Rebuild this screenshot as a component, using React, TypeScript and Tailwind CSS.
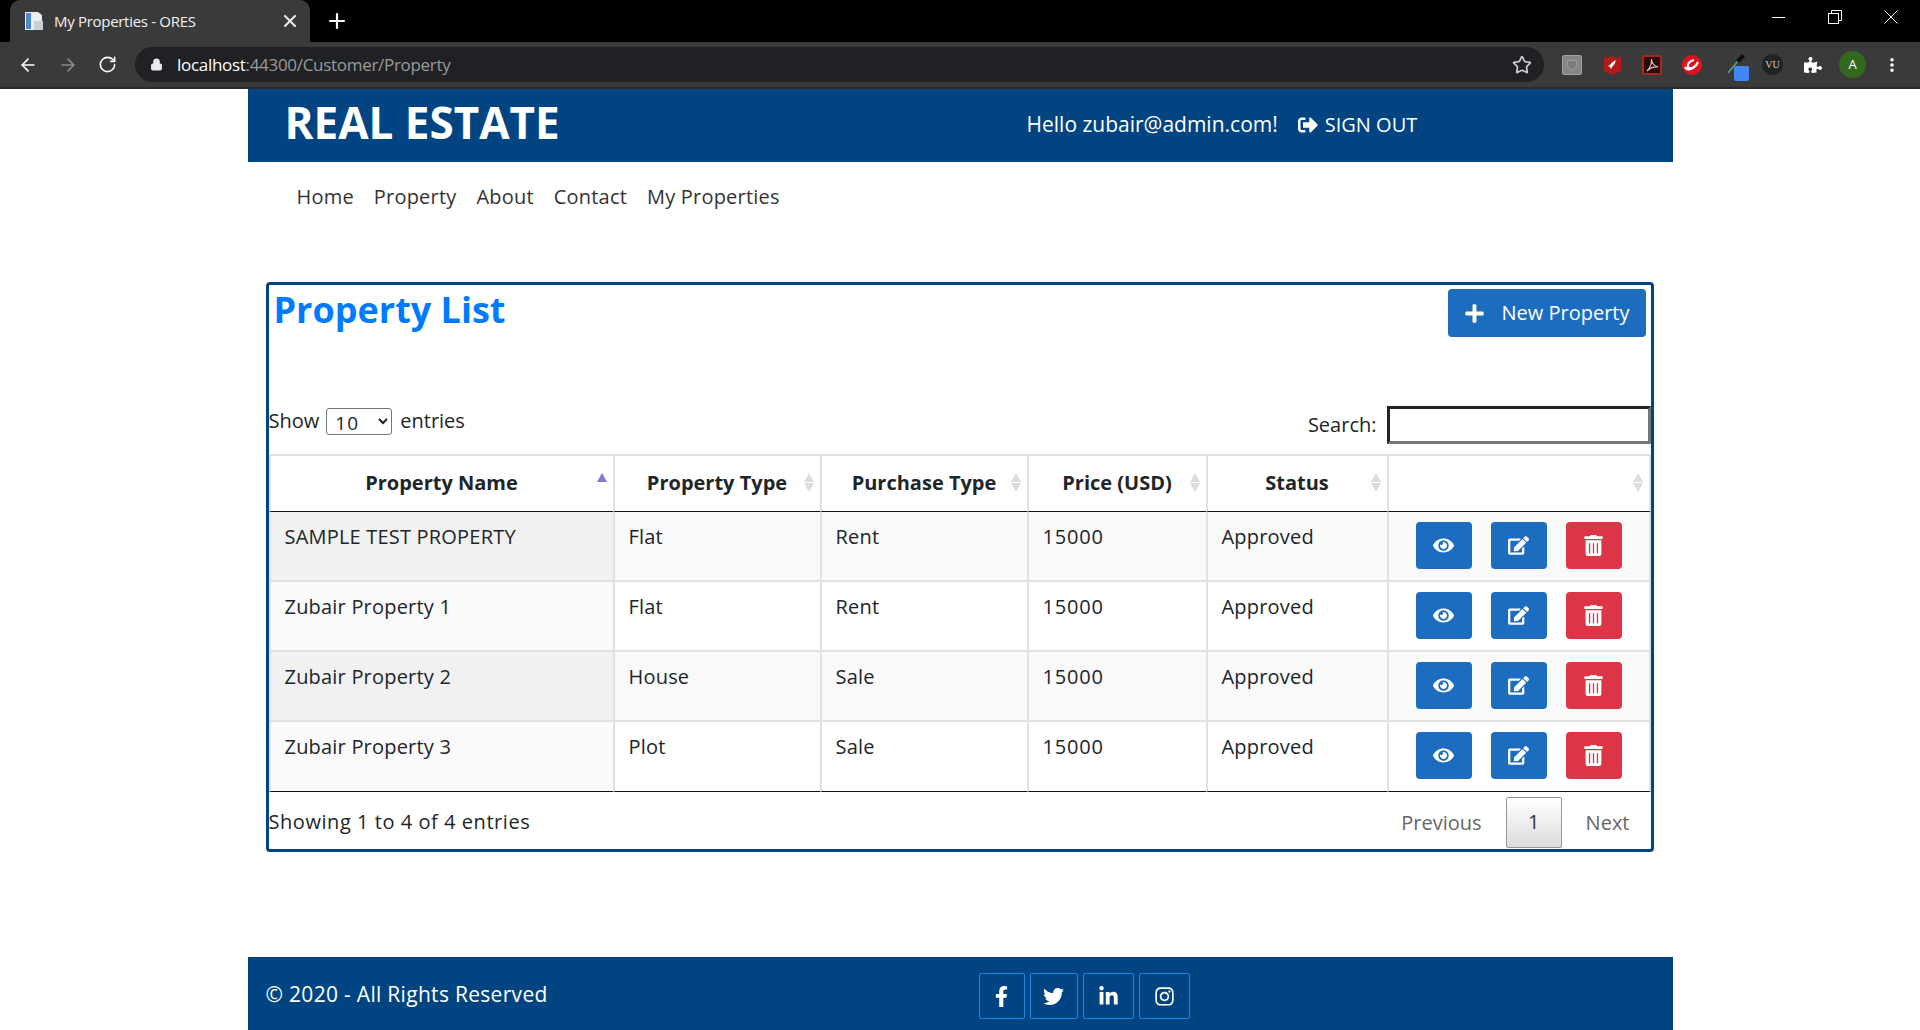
import React from 'react';
import { ArrowLeft, ArrowRight, RotateCw, Lock, Star, X, Plus, MoreVertical } from 'lucide-react';
import { FaEye, FaEdit, FaTrashAlt, FaPlus, FaSignOutAlt, FaFacebookF, FaTwitter, FaLinkedinIn, FaInstagram, FaPuzzlePiece } from 'react-icons/fa';

const rows = [
  { name: 'SAMPLE TEST PROPERTY', type: 'Flat', purchase: 'Rent' },
  { name: 'Zubair Property 1', type: 'Flat', purchase: 'Rent' },
  { name: 'Zubair Property 2', type: 'House', purchase: 'Sale' },
  { name: 'Zubair Property 3', type: 'Plot', purchase: 'Sale' },
];

const headers = [
  { label: 'Property Name', w: 'w-[344px]' },
  { label: 'Property Type', w: 'w-[207px]' },
  { label: 'Purchase Type', w: 'w-[207px]' },
  { label: 'Price (USD)', w: 'w-[179px]' },
  { label: 'Status', w: 'w-[181px]' },
  { label: '', w: 'w-[264px] border-r-[2px]' },
];

const socials = [
  { Icon: FaFacebookF, w: 'w-[46px]' },
  { Icon: FaTwitter, w: 'w-[48px]' },
  { Icon: FaLinkedinIn, w: 'w-[51px]' },
  { Icon: FaInstagram, w: 'w-[51px]' },
];

function SortArrows({ active }: { active?: boolean }) {
  return (
    <span className="absolute right-[6px] top-[17px] flex flex-col gap-[1px]">
      <span className={`h-0 w-0 border-x-[5px] border-b-[9px] border-x-transparent ${active ? 'border-b-[#7b7bd6]' : 'border-b-[#dcdcdc]'}`} />
      {!active && <span className="h-0 w-0 border-x-[5px] border-t-[9px] border-x-transparent border-t-[#dcdcdc]" />}
    </span>
  );
}

function ActionButton({ color, children }: { color: string; children: React.ReactNode }) {
  return (
    <button className={`flex h-[47px] w-[56px] items-center justify-center rounded-[4px] text-[21px] text-white ${color}`}>
      {children}
    </button>
  );
}

function BrowserChrome() {
  return (
    <div className="h-[89px] shrink-0 bg-black font-['Open_Sans',sans-serif] text-white">
      <div className="flex h-[42px] items-end">
        <div className="ml-[10px] flex h-[42px] w-[300px] items-center rounded-t-[10px] bg-[#3a3a3a] pl-[14px] pr-[10px]">
          <svg width="20" height="20" viewBox="0 0 20 20">
            <path d="M1 1h13l4 3v15H1z" fill="#e9eef2" />
            <rect x="2" y="2" width="5" height="16" fill="#4a8ccb" />
            <rect x="10" y="10" width="9" height="9" fill="#c9ced2" />
          </svg>
          <span className="ml-[10px] flex-1 text-[15px] tracking-[-0.3px] text-[#f1f1f1]">My Properties - ORES</span>
          <X size={20} strokeWidth={2.6} className="text-[#e8e8e8]" />
        </div>
        <Plus size={24} strokeWidth={2.2} className="mb-[9px] ml-[15px]" />
        <div className="mb-[18px] ml-auto flex items-center gap-[42px] pr-[22px]">
          <svg width="14" height="14" viewBox="0 0 14 14" stroke="white" strokeWidth="1"><path d="M0 7.5H13" /></svg>
          <svg width="14" height="14" viewBox="0 0 14 14" fill="none" stroke="white" strokeWidth="1">
            <rect x="0.5" y="3.5" width="10" height="10" />
            <path d="M3.5 3.5V0.5H13.5V10.5H10.5" />
          </svg>
          <svg width="14" height="14" viewBox="0 0 14 14" stroke="white" strokeWidth="1"><path d="M0.5 0.5L13.5 13.5M13.5 0.5L0.5 13.5" /></svg>
        </div>
      </div>
      <div className="flex h-[47px] items-center border-b-[2px] border-[#2a2a2a] bg-[#3a3a3a]">
        <ArrowLeft size={20} className="ml-[18px]" />
        <ArrowRight size={20} className="ml-[20px] text-[#8b8b8b]" />
        <RotateCw size={19} className="ml-[20px]" />
        <div className="ml-[18px] flex h-[35px] w-[1409px] items-center rounded-full bg-[#202124] pl-[15px]">
          <Lock size={13} fill="#e8eaed" className="text-[#e8eaed]" />
          <span className="ml-[14px] text-[17px] tracking-[-0.3px] text-white">
            localhost<span className="text-[#9a9a9a]">:44300/Customer/Property</span>
          </span>
          <Star size={20} className="ml-auto mr-[12px] text-[#d0d0d0]" />
        </div>
        <div className="ml-[18px] flex h-[20px] w-[20px] items-center justify-center rounded-[2px] border border-[#a0a0a0] bg-[#858585]">
          <span className="h-[10px] w-[10px] rounded-b-[5px] border border-[#9c9c9c] bg-[#7d7d7d]" />
        </div>
        <svg width="17" height="20" viewBox="0 0 17 20" className="ml-[22px]">
          <path d="M0 1l4 2.5L8.5 0.5 13 3.5 17 1v15l-8.5 4L0 16z" fill="#b31b1b" />
          <path d="M12 5L8 7.5 6 10l-2 1 2 1 1 2 1-2 2.5-3z" fill="#fff" />
        </svg>
        <div className="ml-[21px] flex h-[20px] w-[20px] items-center justify-center rounded-[1px] border-[2px] border-[#a8261e] bg-[#2a0a08]">
          <svg width="14" height="14" viewBox="0 0 14 14" fill="none" stroke="#e6c4c4" strokeWidth="1.2">
            <path d="M2 13C4 11 7 6 6.5 1 6 4 9 8 13 9 9 8.5 5 10 2 13z" />
          </svg>
        </div>
        <svg width="20" height="20" viewBox="0 0 20 20" className="ml-[20px]">
          <circle cx="10" cy="10" r="10" fill="#e1121f" />
          <path d="M3 12c2 4 9 3 13-5-2 5-7 8-10 5-1-2 1-6 6-7" fill="none" stroke="#fff" strokeWidth="2.2" />
        </svg>
        <div className="relative ml-[25px] mt-[6px] h-[27px] w-[22px]">
          <svg width="18" height="20" viewBox="0 0 18 20" className="absolute left-0 top-0">
            <path d="M1 19L11 7" stroke="#5aa878" strokeWidth="1.5" />
            <path d="M10 6l5-5 2 2-5 5z" fill="#111" stroke="#111" strokeWidth="1.5" />
          </svg>
          <span className="absolute left-[7px] top-[12px] h-[15px] w-[15px] rounded-[2px] bg-[#4285f4]" />
        </div>
        <div className="ml-[13px] flex h-[21px] w-[21px] items-center justify-center rounded-full bg-[#222] font-['Liberation_Serif',serif] text-[10px] text-[#ccc]">VU</div>
        <FaPuzzlePiece size={18} className="ml-[21px]" />
        <div className="ml-[17px] flex h-[27px] w-[27px] items-center justify-center rounded-full bg-[#33691e] text-[13px]">A</div>
        <MoreVertical size={18} strokeWidth={2.8} className="ml-[17px]" />
      </div>
    </div>
  );
}

function PropertyTable() {
  return (
    <table className="w-[1382px] table-fixed border-separate border-spacing-0 text-[20px] text-[#212529]">
      <thead>
        <tr>
          {headers.map((h) => (
            <th key={h.label} className={`relative h-[58px] border-b-[1px] border-l-[2px] border-t-[2px] border-[#dee2e6] border-b-[#111] px-[14px] pb-[2px] text-center font-bold ${h.w}`}>
              {h.label}
              <SortArrows active={h.label === 'Property Name'} />
            </th>
          ))}
        </tr>
      </thead>
      <tbody>
        {rows.map((row, i) => {
          const line = i === 3 ? 'border-b-[1px] border-l-[2px] border-[#dee2e6] border-b-[#111]' : 'border-b-[2px] border-l-[2px] border-[#dee2e6]';
          return (
            <tr key={row.name} className={i % 2 === 0 ? 'bg-[#f9f9f9]' : 'bg-white'}>
              <td className={`h-[70px] px-[14px] pt-[10px] align-top tracking-[0.2px] ${line} ${i % 2 === 0 ? 'bg-[#f1f1f1]' : 'bg-[#fafafa]'}`}>{row.name}</td>
              <td className={`px-[14px] pt-[10px] align-top tracking-[0.2px] ${line}`}>{row.type}</td>
              <td className={`px-[14px] pt-[10px] align-top tracking-[0.2px] ${line}`}>{row.purchase}</td>
              <td className={`px-[14px] pt-[10px] align-top tracking-[0.8px] ${line}`}>15000</td>
              <td className={`px-[14px] pt-[10px] align-top tracking-[0.2px] ${line}`}>Approved</td>
              <td className={`border-r-[2px] pl-[27px] align-top ${line}`}>
                <div className="flex gap-[19px] pt-[10px]">
                  <ActionButton color="bg-[#1c6dc0]"><FaEye /></ActionButton>
                  <ActionButton color="bg-[#1c6dc0]"><FaEdit /></ActionButton>
                  <ActionButton color="bg-[#dc3545]"><FaTrashAlt /></ActionButton>
                </div>
              </td>
            </tr>
          );
        })}
      </tbody>
    </table>
  );
}

export default function App() {
  return (
    <div className="flex h-[1030px] flex-col overflow-hidden bg-white font-['Open_Sans',sans-serif] text-[20px] text-[#212529]">
      <BrowserChrome />
      <div className="mx-auto flex w-[1425px] flex-1 flex-col">
        <header className="flex h-[73px] items-center bg-[#004581] text-white">
          <h1 className="mb-[7px] ml-[37px] w-[272px] whitespace-nowrap text-[44px] font-bold leading-none">REAL ESTATE</h1>
          <span className="mb-[2px] ml-[470px] text-[21px]">Hello zubair@admin.com!</span>
          <a className="mb-[2px] ml-[20px] flex items-center gap-[7px] text-[20px]"><FaSignOutAlt className="text-[20px]" />SIGN OUT</a>
        </header>

        <nav className="flex gap-[20px] pl-[49px] pt-[20px] tracking-[0.2px] text-[#333]">
          <a>Home</a>
          <a>Property</a>
          <a>About</a>
          <a>Contact</a>
          <a>My Properties</a>
        </nav>

        <section className="ml-[18px] mr-[19px] mt-[70px] h-[570px] rounded-[4px] border-[3px] border-[#004581]">
          <div className="flex items-start justify-between pl-[5px] pr-[5px] pt-[4px]">
            <h2 className="-mt-[1px] text-[36px] font-bold leading-[44px] text-[#007bff]">Property List</h2>
            <button className="flex h-[48px] w-[198px] items-center rounded-[4px] bg-[#1c6dc0] pl-[16px] text-white">
              <FaPlus className="mr-[17px] text-[21px]" />New Property
            </button>
          </div>
          <div className="mt-[69px] flex items-start justify-between">
            <label className="flex h-[30px] items-center">
              Show
              <select className="ml-[7px] mr-[8px] h-[27px] w-[66px] rounded-[3px] border border-[#767676] bg-white pl-[4px] text-[19px] tracking-[1px]">
                <option>10</option>
              </select>
              entries
            </label>
            <label className="flex items-center">
              Search:
              <input className="ml-[10px] h-[38px] w-[264px] border-[3px] border-b-[#767676] border-l-[#222] border-r-[#767676] border-t-[#222]" />
            </label>
          </div>
          <div className="mt-[10px]"><PropertyTable /></div>
          <div className="flex items-start justify-between">
            <p className="mt-[15px] tracking-[0.55px]">Showing 1 to 4 of 4 entries</p>
            <div className="mr-[21px] flex items-center text-[#666]">
              <span className="mr-[24px] mt-[5px]">Previous</span>
              <span className="mr-[24px] mt-[5px] flex h-[51px] w-[56px] items-center justify-center rounded-[2px] border border-[#979797] bg-gradient-to-b from-white to-[#dcdcdc] pb-[1px] text-[#333]">1</span>
              <span className="mt-[5px]">Next</span>
            </div>
          </div>
        </section>

        <footer className="mt-auto flex h-[73px] items-center bg-[#004581] text-white">
          <p className="ml-[18px] mt-[3px] w-[280px] whitespace-nowrap text-[21px] tracking-[0.3px]">© 2020 - All Rights Reserved</p>
          <div className="ml-[433px] mt-[5px] flex gap-[5px]">
            {socials.map(({ Icon, w }, i) => (
              <a key={i} className={`flex h-[46px] items-center justify-center rounded-[2px] border border-[#1a86e8] text-[21px] ${w}`}><Icon /></a>
            ))}
          </div>
        </footer>
      </div>
    </div>
  );
}
